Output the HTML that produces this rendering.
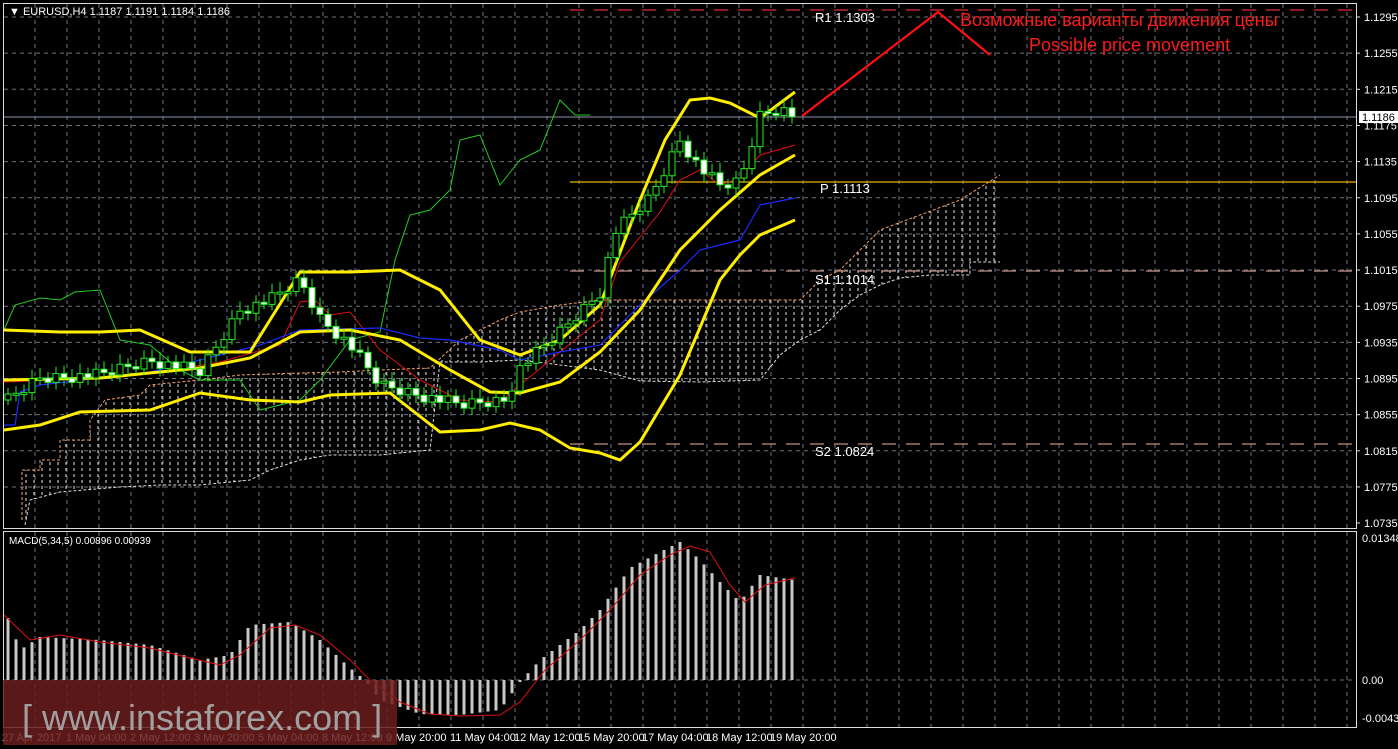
<!DOCTYPE html>
<html><head><meta charset="utf-8"><style>
html,body{margin:0;padding:0;background:#000;width:1398px;height:749px;overflow:hidden}
svg{display:block}
text{font-family:"Liberation Sans",sans-serif}
</style></head><body>
<svg id="s" width="1398" height="749" xmlns="http://www.w3.org/2000/svg">
<defs>
<pattern id="dots" width="8" height="6" patternUnits="userSpaceOnUse">
<line x1="2" y1="0" x2="2" y2="3" stroke="#fff" stroke-width="1"/>
</pattern>
</defs>
<rect width="1398" height="749" fill="#000"/>
<g id="grid"></g>
<polygon points="22,520 22,470 40,470 40,460 60,460 60,440 90,440 90,420 105,400 140,395 150,385 200,380 240,375 300,373 340,372 380,370 430,368 460,340 500,320 520,312 560,305 600,300 640,300 680,300 720,300 760,300 800,300 820,280 840,270 880,230 920,215 960,200 1000,175 1000,262 970,262 970,275 930,275 900,278 880,285 860,295 840,310 820,330 800,340 780,355 760,380 700,382 640,381 600,370 560,365 520,360 480,362 440,362 430,450 380,455 330,455 300,460 270,470 250,480 200,485 160,485 120,487 60,492 30,500 25,525" fill="url(#dots)" opacity="0.9"/>
<polyline points="22,520 22,470 40,470 40,460 60,460 60,440 90,440 90,420 105,400 140,395 150,385 200,380 240,375 300,373 340,372 380,370 430,368 460,340 500,320 520,312 560,305 600,300 640,300 680,300 720,300 760,300 800,300 820,280 840,270 880,230 920,215 960,200 1000,175" fill="none" stroke="#f4a06a" stroke-width="1" stroke-dasharray="3,2"/>
<polyline points="25,525 30,500 60,492 120,487 160,485 200,485 250,480 270,470 300,460 330,455 380,455 430,450 440,362 480,362 520,360 560,365 600,370 640,381 700,382 760,380 780,355 800,340 820,330 840,310 860,295 880,285 900,278 930,275 970,275 970,262 1000,262" fill="none" stroke="#ddd" stroke-width="1" stroke-dasharray="3,2"/>
<line x1="570" y1="10" x2="1356" y2="10" stroke="#e03030" stroke-dasharray="14,10" stroke-width="1.3"/>
<line x1="570" y1="182" x2="1356" y2="182" stroke="#e8b000" stroke-width="1.3"/>
<line x1="570" y1="271" x2="1356" y2="271" stroke="#c09080" stroke-dasharray="14,10" stroke-width="1.3"/>
<line x1="570" y1="444" x2="1356" y2="444" stroke="#c09080" stroke-dasharray="14,10" stroke-width="1.3"/>
<line x1="3" y1="117" x2="1356" y2="117" stroke="#8a96a8" stroke-width="1"/>
<g font-family="Liberation Mono,monospace" font-size="13" fill="#fff">
<text x="815" y="22">R1 1.1303</text>
<text x="820" y="193">P 1.1113</text>
<text x="815" y="284">S1 1.1014</text>
<text x="815" y="456">S2 1.0824</text>
</g>
<g id="lines"></g>
<g id="candles"></g>
<polyline points="802,116 938,12 990,55" fill="none" stroke="#ff1010" stroke-width="2.2"/>
<text x="960" y="26" font-size="18" fill="#ff1a1a">Возможные варианты движения цены</text>
<text x="1029" y="51" font-size="18" fill="#ff1a1a">Possible price movement</text>
<rect x="3.5" y="3.5" width="1353" height="525" fill="none" stroke="#ddd" stroke-width="1"/>
<rect x="3.5" y="531.5" width="1353" height="196" fill="none" stroke="#ddd" stroke-width="1"/>
<g id="macd"></g>
<text x="9" y="15" font-size="11" fill="#fff">▼ EURUSD,H4  1.1187 1.1191 1.1184 1.1186</text>
<text x="9" y="544" font-size="10" fill="#fff">MACD(5,34,5) 0.00896 0.00939</text>
<g id="axis" font-size="11" fill="#fff"></g>
<rect x="1359" y="111" width="39" height="12" fill="#fff"/>
<text x="1362" y="121" font-size="11" fill="#000">1.1186</text>
<rect x="3" y="680" width="394" height="65" fill="#6a1c1c" opacity="0.85"/>
<text x="22" y="730" font-size="36" fill="#a0a0a0">[ www.instaforex.com ]</text>
</svg>
<script>
(function(){
var NS="http://www.w3.org/2000/svg";
function el(p,t,a){var e=document.createElementNS(NS,t);for(var k in a)e.setAttribute(k,a[k]);document.getElementById(p).appendChild(e);return e;}
for(var x=35;x<1356;x+=32){el('grid','line',{x1:x,y1:4,x2:x,y2:528,stroke:'#6b7280','stroke-dasharray':'4,4'});el('grid','line',{x1:x,y1:532,x2:x,y2:727,stroke:'#6b7280','stroke-dasharray':'4,4'});}
var prices=['1.1295','1.1255','1.1215','1.1175','1.1135','1.1095','1.1055','1.1015','1.0975','1.0935','1.0895','1.0855','1.0815','1.0775','1.0735'];
for(var i=0;i<15;i++){var y=17+i*36.15;if(i==14)y=523;if(i<14)el('grid','line',{x1:4,y1:y,x2:1356,y2:y,stroke:'#6b7280','stroke-dasharray':'4,4'});
el('axis','line',{x1:1356,y1:y,x2:1360,y2:y,stroke:'#ddd'});var t=el('axis','text',{x:1364,y:y+4});t.textContent=prices[i];}
el('grid','line',{x1:4,y1:680,x2:1356,y2:680,stroke:'#6b7280','stroke-dasharray':'4,4'});
[['0.01348',542],['0.00',684],['-0.00438',722]].forEach(function(a){var t=el('axis','text',{x:1362,y:a[1]});t.textContent=a[0];});
var tl=['27 Apr 2017','1 May 04:00','2 May 12:00','3 May 20:00','5 May 04:00','8 May 12:00','9 May 20:00','11 May 04:00','12 May 12:00','15 May 20:00','17 May 04:00','18 May 12:00','19 May 20:00'];
tl.forEach(function(l,i){var t=el('axis','text',{x:2+i*64,y:741});t.textContent=l;});
function interp(pts,x){for(var i=0;i<pts.length-1;i++){if(x>=pts[i][0]&&x<=pts[i+1][0]){var f=(x-pts[i][0])/(pts[i+1][0]-pts[i][0]);return pts[i][1]+f*(pts[i+1][1]-pts[i][1]);}}return pts[pts.length-1][1];}
function pl(pts,c,w){el('lines','polyline',{points:pts.map(function(p){return p.join(',')}).join(' '),fill:'none',stroke:c,'stroke-width':w});}
pl([[4,330],[15,305],[40,298],[60,300],[75,292],[100,290],[120,340],[150,345],[180,370],[200,380],[240,380],[260,410],[300,400],[320,380],[350,340],[380,332],[395,260],[410,215],[430,210],[450,190],[460,140],[480,135],[500,185],[520,160],[540,150],[560,100],[575,115],[590,115]],'#22cc22',1);
pl([[4,382],[100,378],[160,372],[220,362],[280,345],[300,302],[315,300],[330,315],[350,312],[380,350],[420,380],[460,400],[500,402],[520,385],[560,352],[600,320],[620,262],[660,212],[680,180],[700,170],[720,185],[740,178],[760,155],[795,145]],'#e01010',1);
pl([[4,425],[15,425],[20,392],[40,385],[100,378],[150,372],[200,360],[260,345],[300,330],[380,328],[420,338],[450,340],[500,350],[520,360],[560,352],[600,345],[640,305],[680,270],[700,250],[720,245],[740,240],[760,205],[795,198]],'#1a2aff',1.2);
pl([[4,330],[60,332],[100,332],[140,330],[190,352],[250,352],[300,272],[350,272],[400,270],[440,290],[480,340],[520,355],[560,340],[600,305],[640,200],[665,140],[690,100],[710,98],[730,103],[760,118],[795,92]],'#ffee00',3);
pl([[4,380],[100,378],[200,368],[250,358],[300,332],[350,330],[400,340],[450,370],[490,392],[520,393],[560,382],[600,352],[640,310],[680,250],[720,210],[760,175],[795,155]],'#ffee00',3);
pl([[4,430],[40,425],[80,412],[150,410],[200,393],[250,400],[300,402],[330,395],[390,393],[440,432],[480,430],[510,423],[540,430],[570,448],[600,453],[620,460],[640,442],[680,375],[720,280],[740,255],[760,235],[795,220]],'#ffee00',3);
var close=[[8,400],[40,378],[100,375],[150,360],[200,372],[240,310],[270,300],[300,280],[320,318],[350,345],[380,385],[420,395],[460,405],[505,400],[520,368],[560,332],[600,292],[615,232],[650,198],[680,140],[700,168],[720,186],[740,182],[760,115],[780,108],[795,116]];
var prev=interp(close,8);
for(var x=8,k=0;x<=795;x+=8,k++){var c=interp(close,x)+((k*37)%11-5)*1.2;var o=prev;var tp=Math.min(o,c),bt=Math.max(o,c);if(bt-tp<2)bt=tp+2;
el('candles','line',{x1:x,y1:tp-6-(k%5),x2:x,y2:bt+5+(k%4),stroke:'#22ee22'});
el('candles','rect',{x:x-3,y:tp,width:6,height:bt-tp,fill:c>o?'#fff':'#000',stroke:'#22ee22'});prev=c;}
var mb=[[8,618],[20,650],[40,637],[100,640],[150,645],[200,660],[230,655],[250,625],[290,622],[320,640],[350,668],[365,680],[380,700],[420,714],[460,715],[500,710],[520,682],[540,660],[580,630],[600,610],[630,568],[660,552],[680,542],[700,560],[720,582],[740,602],[760,575],[795,580]];
for(var x2=8;x2<=795;x2+=8){var yy=interp(mb,x2);el('macd','rect',{x:x2-1.5,y:Math.min(yy,680),width:3,height:Math.abs(680-yy),fill:'#c8c8c8'});}
el('macd','polyline',{points:'4,615 30,640 60,635 100,642 150,648 190,658 220,665 240,655 270,628 295,625 320,635 350,660 370,680 400,702 430,714 460,716 500,715 520,702 545,670 580,640 610,610 640,575 670,555 690,546 710,552 730,585 745,602 765,585 795,578',fill:'none',stroke:'#e01010','stroke-width':1});
})();
</script>
</body></html>
